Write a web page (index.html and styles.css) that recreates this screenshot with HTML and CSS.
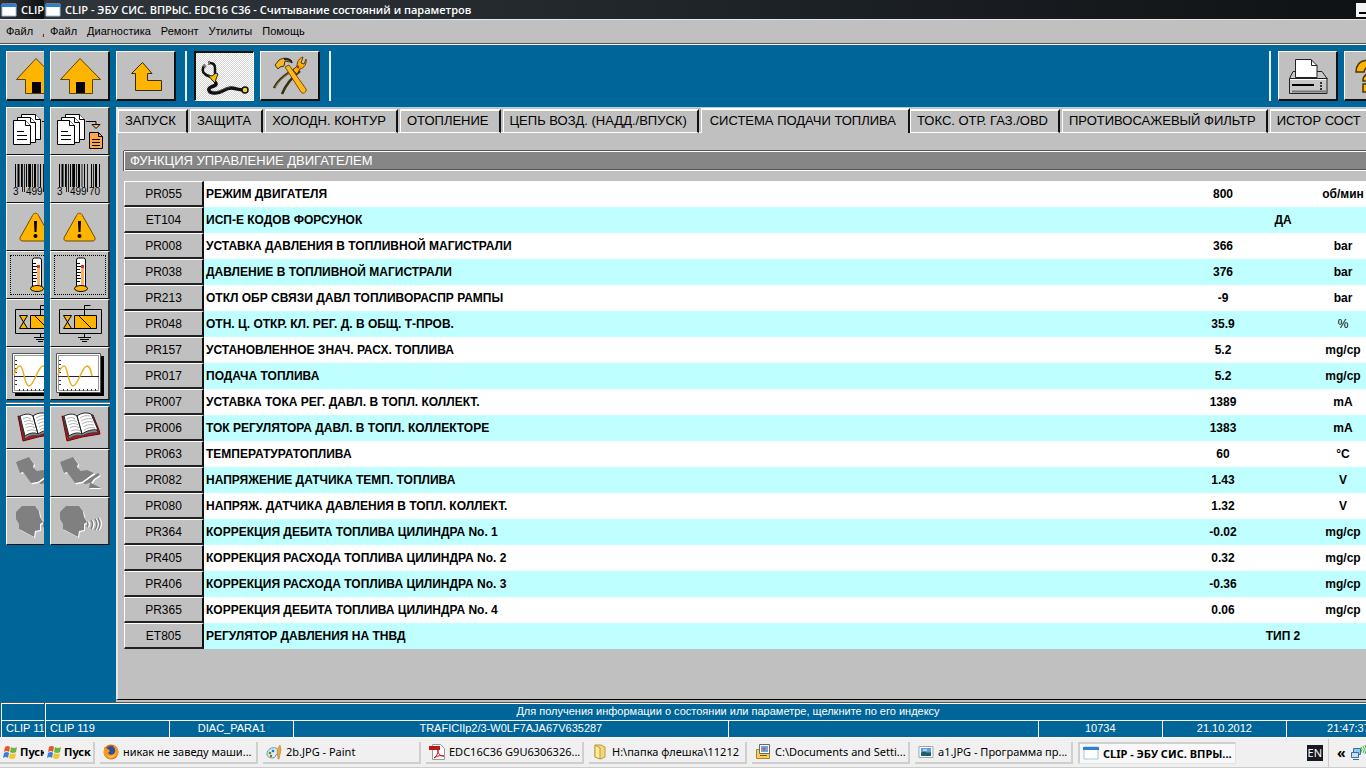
FILE: index.html
```
<!DOCTYPE html>
<html lang="ru">

<head>
  <meta charset="UTF-8">
  <meta name="viewport" content="width=device-width, initial-scale=1.0">

  <title>CLIP - Считывание состояний и параметров</title>
  <link rel="stylesheet" href="styles.css">
</head>

<body>
<!-- Icon set -->
<svg class="icon-defs" aria-hidden="true">
  <symbol id="i-app" viewBox="0 0 16 16">
    <path d="M1 2h14v12H1z" fill="#fff" stroke="#a9c3de"/>
    <path d="M0 2h16v3H0z" fill="#2f7fd0"/>
  </symbol>
  <symbol id="i-home" viewBox="0 0 60 50">
    <path d="M30 7.500 50.500 28.500H42.500V42.500H19.500V28.500H10.500Z" fill="#ffb400" stroke="#5e4200"/>
    <path d="M26 31h9v11h-9z" fill="#000"/>
  </symbol>
  <symbol id="i-up" viewBox="0 0 60 50">
    <path d="M26.500 11.500 36 22.500H31.500V29.500H45.500V39.500H19.500V22.500H15.500Z" fill="#ffb400" stroke="#3c2b00"/>
  </symbol>
  <symbol id="i-steth" viewBox="0 0 60 50">
    <path d="M11 13C8 16 8 20 11 22C13 24 15 24 17 25M16 11C20 11 21 13 21 16V22" fill="none" stroke="#111" stroke-width="2.500"/>
    <path d="M9 13l3 2M15 9v4" stroke="#776" stroke-width="2"/>
    <path d="M14 23l4 1 4-3 2 1-2 5-1 4-3-3z" fill="#ffc000" stroke="#222"/>
    <path d="M21 30C24 33 20 34 17 35C13 37 15 41 20 41C28 42 30 36 37 36C41 36 44 38 49 38" fill="none" stroke="#111" stroke-width="3.500"/>
    <path d="M18 39c7 2 11-3 18-4" fill="none" stroke="#666" stroke-width=".7"/>
    <circle cx="51" cy="38" r="3" fill="#ffd230" stroke="#111" stroke-width="1.500"/>
  </symbol>
  <symbol id="i-tools" viewBox="0 0 60 50">
    <path d="M37 17C28 22 19 27 14 37M40 20C31 27 26 33 22 43" fill="none" stroke="#3b2d10" stroke-width="2.500"/>
    <path d="M36 18C27 23 20 28 15 36" fill="none" stroke="#b08a3c" stroke-width=".8"/>
    <path d="M25 16l4-2 17 24c1 3-3 6-5 3z" fill="#ffb81c" stroke="#7a4c00"/>
    <path d="M15 14l4-5c5-3 10-2 13 1l-2 1-5-1-1 5-4 1-2 2z" fill="#f3b62c" stroke="#4a3208"/>
    <path d="M24 8c4 0 7 1 8 4" fill="none" stroke="#222" stroke-width="2"/>
    <path d="M33 19l4-4c0-4 2-8 6-9l-2 6 3 1 2-5c1 5-2 9-6 10l-3 5z" fill="#ffb000" stroke="#5f3e00"/>
    <circle cx="38" cy="16" r="1.500" fill="#c03010"/>
  </symbol>
  <symbol id="i-print" viewBox="0 0 60 50">
    <path d="M15 20.500h29l5 7v15H11.500v-15z" fill="#c8c8c8" stroke="#222"/>
    <path d="M17.500 26.500v-18H33l6 6v12z" fill="#fff" stroke="#222"/>
    <path d="M33.500 8.500v6H39" fill="none" stroke="#222"/>
    <path d="M11.500 27.500h38" stroke="#222"/>
    <path d="M12 28.500h36" stroke="#fff"/>
    <path d="M14 34h22" stroke="#000" stroke-width="2"/>
    <path d="M14 40.500h34" stroke="#777" stroke-width="2"/>
    <path d="M42 32h2M42 35h2M42 38h2" stroke="#000" stroke-width="1.500"/>
  </symbol>
  <symbol id="i-help" viewBox="0 0 60 50">
    <path d="M12 21C12 12 18 9 25 9c8 0 13 4 13 10 0 8-11 7-10 11H19c-1-8 9-8 9-11 0-4-7-4-8 2zM19 33h9v8h-9z" fill="#ffb400" stroke="#4c3500" stroke-width="1.500"/>
  </symbol>
  <symbol id="i-docs" viewBox="0 0 60 48">
    <g fill="#fff" stroke="#000">
      <path d="M15.500 7.500h14l5 5v20h-19z"/>
      <path d="M29.500 7.500v5h5"/>
      <path d="M11.500 10.500h13l5 5v20h-18z"/>
      <path d="M24.500 10.500v5h5"/>
      <path d="M7.500 13.500h12l5 5v19h-17z"/>
      <path d="M19.500 13.500v5h5"/>
    </g>
    <path d="M11 24.500h7M11 28.500h10M11 32.500h10M36 14.500h10v3" fill="none" stroke="#000"/>
    <path d="M42 17.500h8l-4 4z" fill="#ffb366" stroke="#000"/>
    <path d="M39.500 25.500h9l4 4v12h-13z" fill="#ffa64d" stroke="#000"/>
    <path d="M48.500 25.500v4h4M42 32.500h8M42 35.500h8M42 38.500h8" fill="none" stroke="#000"/>
  </symbol>
  <symbol id="i-barcode" viewBox="0 0 60 48">
    <path d="M9.500 9v23M15.500 9v23M20.500 9v23M34.500 9v23M41.500 9v23M49.500 9v23" stroke="#000"/>
    <path d="M12.500 9v23M24 9v23M29 9v23M46 9v23" stroke="#000" stroke-width="2"/>
    <path d="M16.500 9v28M18.500 9v28M37.500 9v28M22.500 9v23M26.500 9v23M32 9v23M43.500 9v23" stroke="#222"/>
  </symbol>
  <symbol id="i-warn" viewBox="0 0 60 48">
    <path d="M26.500 12.500c1-3 5-3 6 0L44 33c2 3 1 5-2 5H17c-3 0-4-2-2-5z" fill="#ffb400" stroke="#6b4a00"/>
    <path d="M28 18h3l-.5 11h-2z" fill="#000"/>
    <circle cx="29.500" cy="33" r="2" fill="#000"/>
  </symbol>
  <symbol id="i-thermo" viewBox="0 0 60 48">
    <path d="M26.500 9q0-2 2-2h5q2 0 2 2v28h-9z" fill="#fff" stroke="#000"/>
    <path d="M31 15h3v21h-3z" fill="#ffb066"/>
    <path d="M31 14h3v3h-3z" fill="#e03020"/>
    <path d="M27 12.500h3M27 15.500h4M27 18.500h3M27 21.500h4M27 24.500h3M27 27.500h4M27 30.500h3" stroke="#000"/>
    <ellipse cx="31" cy="37.500" rx="6.500" ry="3" fill="#ffb400" stroke="#000"/>
  </symbol>
  <symbol id="i-valve" viewBox="0 0 60 48">
    <path d="M34.500 16v-9.500h6M9.500 34.500v-24h42v24zM34.500 34v4M28 38.500h13M30 40.500h9M32 42.500h5" fill="none" stroke="#000"/>
    <path d="M13.500 16.500h8l-8 13h8z" fill="#ffb400" stroke="#000"/>
    <path d="M24.500 16.500h22v13h-22z" fill="#ffb400" stroke="#000"/>
    <path d="M29 17l12 12M21 29.500h4" stroke="#000"/>
  </symbol>
  <symbol id="i-wave" viewBox="0 0 60 53">
    <path d="M9 9h45v40H9z" fill="#000"/>
    <path d="M6.500 6.500h44v39h-44z" fill="#fff" stroke="#555"/>
    <path d="M8.500 8.500h40v35h-40z" fill="#fff" stroke="#999"/>
    <path d="M8 29.500h41" stroke="#224"/>
    <path d="M9 13.500h2M9 17.500h2M9 21.500h2M9 25.500h2M9 33.500h2M9 37.500h2M13.500 42v2M17.500 42v2M21.500 42v2M25.500 42v2M29.500 42v2M33.500 42v2M37.500 42v2M41.500 42v2M45.500 42v2" stroke="#333"/>
    <path d="M8 28c2-6 4-9 6-9 4 0 4 20 9 20S32 19 37 19c3 0 4 5 5 10" fill="none" stroke="#e8b020" stroke-width="1.500"/>
  </symbol>
  <symbol id="i-book" viewBox="0 0 60 43">
    <path d="M12 10l5 25 15-4 18-3-1-4-6-15-26 2z" fill="#b01828" stroke="#700"/>
    <path d="M13 11l6 22c4-3 8-4 13-3 4-2 10-4 16-3L43 9z" fill="#888" stroke="#333"/>
    <path d="M14 10c5-2 9-3 13 0l5 18c-4-2-9-1-13 2zM27 10c4-3 9-4 14-2l7 16c-6-1-12 1-16 4z" fill="#fff" stroke="#222"/>
    <path d="M17 13c3-2 5-2 8 0M18 16c3-2 6-2 9 0M19 19c3-2 6-2 9 0M20 22c3-2 6-2 9 0M21 25c3-1 6-2 9 0M30 12c3-2 6-3 10-2M31 15c3-2 7-3 11-2M32 18c3-2 7-3 11-2M33 21c3-2 7-3 11-2M34 24c3-2 6-3 11-2" fill="none" stroke="#999" stroke-width=".8"/>
  </symbol>
  <symbol id="i-seat" viewBox="0 0 60 48">
    <path d="M10 13 23 8 28 15 27 18 31 22 37 21 44 24 32 33 25 34 17 23 14 24ZM33 32 40 28 48 24 50 26 44 30 41 35 51 39H39L40 34Z" fill="#fff" transform="translate(1 1)"/>
    <path d="M10 13 23 8 28 15 27 18 31 22 37 21 44 24 32 33 25 34 17 23 14 24Z" fill="#808080"/>
    <path d="M33 34 40 29 48 24 50 26 44 30 41 34 51 39H39L40 34 35 35Z" fill="#808080"/>
    <path d="M26 35 33 33 45 25" fill="none" stroke="#fff"/>
  </symbol>
  <symbol id="i-voice" viewBox="0 0 60 48">
    <path id="head" d="M10 15 16 9H29L33 14 34 20 37 25 34 27V33L29 34 28 40 13 32V27L10 22Z" fill="#fff" transform="translate(1 1)"/>
    <path d="M10 15 16 9H29L33 14 34 20 37 25 34 27V33L29 34 28 40 13 32V27L10 22Z" fill="#808080"/>
    <path d="M38 25q2 2 0 5M42 23q3 4 0 9M46 22q4 5 0 11M49 21q4 6 0 12" fill="none" stroke="#fff" stroke-width="2"/>
    <path d="M37 25q2 2 0 5M41 23q3 4 0 9M45 22q4 5 0 11M48 21q4 6 0 12" fill="none" stroke="#808080" stroke-width="1.500"/>
  </symbol>
  <symbol id="i-start" viewBox="0 0 16 16">
    <path d="M2 3q3-2 5 0l-1 5q-2-2-5 0z" fill="#e8542a"/>
    <path d="M8 3q3 2 6 0l-1 5q-3 2-6 0z" fill="#69b63c"/>
    <path d="M1 9q3-2 5 0l-1 5q-2-2-5 0z" fill="#3b7ed6"/>
    <path d="M7 9q3 2 6 0l-1 5q-3 2-6 0z" fill="#f4c52f"/>
  </symbol>
  <symbol id="i-firefox" viewBox="0 0 16 16">
    <circle cx="8" cy="8" r="7.500" fill="#e26a12"/>
    <circle cx="8" cy="6.500" r="4.500" fill="#2b4f9e"/>
    <path d="M1 3c2 1 3 2 4 2l2 2-2 2c2 3 6 2 7-1 1-3-1-5-2-6 4 0 6 4 5 8-3 6-12 7-14 0z" fill="#f79a1c"/>
    <path d="M4 11c4 3 8 1 9-3-1 6-6 7-9 3z" fill="#ffe070"/>
  </symbol>
  <symbol id="i-paint" viewBox="0 0 16 16">
    <path d="M1 10c0-5 5-7 9-6 4 2 3 5 1 6s-1 4-4 4-6-1-6-4z" fill="#d9eef2" stroke="#5d9aa8"/>
    <circle cx="4" cy="9" r="1.300" fill="#3a9b3a"/>
    <circle cx="7" cy="7" r="1.300" fill="#2f6fd0"/>
    <circle cx="5" cy="12" r="1.200" fill="#d04030"/>
    <path d="M14 1l1 5-2 9h-1l-1-9z" fill="#f2a63a" stroke="#a96a20" stroke-width=".5"/>
  </symbol>
  <symbol id="i-pdf" viewBox="0 0 16 16">
    <path d="M3.500.5h8l4 4v11h-12z" fill="#fff" stroke="#999"/>
    <path d="M0 2h11v4H0z" fill="#c01818"/>
    <path d="M5 14c3-2 4-5 4-8 0 4 2 6 6 6-4-1-7 0-10 2z" fill="none" stroke="#c01818"/>
  </symbol>
  <symbol id="i-folder" viewBox="0 0 16 16">
    <path d="M3 1h6l4 2v10l-4 2-6-2z" fill="#f5d778" stroke="#c09a3a"/>
    <path d="M3 1l5 3v11l-5-2z" fill="#ffeaa0" stroke="#c09a3a"/>
  </symbol>
  <symbol id="i-pictures" viewBox="0 0 16 16">
    <path d="M1.500 5.500h13v9h-13z" fill="#f5d25c" stroke="#a8822a"/>
    <path d="M4.500.5h10v9h-10z" fill="#fff" stroke="#667"/>
    <path d="M6 2h7v6H6z" fill="#6aa5e0"/>
    <circle cx="9" cy="5" r="1.500" fill="#d65a30"/>
    <path d="M5 11.500h7" stroke="#745810"/>
  </symbol>
  <symbol id="i-viewer" viewBox="0 0 16 16">
    <path d="M1 2.500h14v11H1z" fill="#fff" stroke="#98a6b8"/>
    <path d="M3 4h10v8H3z" fill="#5f9fd8"/>
    <path d="M3 9c3-3 6 1 10-1v4H3z" fill="#1f5c66"/>
    <path d="M5 6h4" stroke="#fff"/>
  </symbol>
  <symbol id="i-net" viewBox="0 0 16 16">
    <path d="M3.500 3.500h7v6h-7z" fill="#8fc8f5" stroke="#446a9a"/>
    <path d="M1.500 7.500h7v5h-7z" fill="#bfe2ff" stroke="#446a9a"/>
    <path d="M3 14.500h6" stroke="#446a9a"/>
    <path d="M11 2q2 2 0 5M13 1q3 3 0 7M15 0q3 4 0 9" fill="none" stroke="#39b530"/>
  </symbol>
</svg>

<div class="desktop">

  <!-- Window underneath, only its left edge shows -->
  <div class="window window-behind">
    <header class="title-bar">
      <svg class="icon-small"><use href="#i-app"/></svg>
      <span>CLIP</span>
    </header>
    <nav class="menu-bar">
      <a href="#">Файл</a>
      <a href="#">Диагностика</a>
    </nav>
    <div class="toolbar">
      <button class="tool" aria-label="Домой"><svg><use href="#i-home"/></svg></button>
    </div>
    <div class="workspace">
      <aside class="sidebar">
        <button class="side" aria-label="Отчет"><svg><use href="#i-docs"/></svg></button>
        <button class="side" aria-label="Идентификация">
          <svg viewBox="0 0 60 48">
            <use href="#i-barcode"/>
            <text x="7" y="40">3</text>
            <text x="20" y="40">499</text>
            <text x="39" y="40">70</text>
          </svg>
        </button>
        <button class="side" aria-label="Неисправности"><svg><use href="#i-warn"/></svg></button>
        <button class="side focused" aria-label="Параметры"><svg><use href="#i-thermo"/></svg></button>
        <button class="side" aria-label="Команды"><svg><use href="#i-valve"/></svg></button>
        <button class="side side-tall" aria-label="График"><svg><use href="#i-wave"/></svg></button>
        <hr class="side-line">
        <button class="side side-low" aria-label="Справочник"><svg><use href="#i-book"/></svg></button>
        <button class="side" disabled aria-label="Рабочее место"><svg><use href="#i-seat"/></svg></button>
        <button class="side" disabled aria-label="Голос"><svg><use href="#i-voice"/></svg></button>
      </aside>
    </div>
    <div class="status-hint"></div>
    <div class="status-bar"><span class="cell cell-left">CLIP 119</span></div>
    <footer class="taskbar">
      <button class="start"><svg class="icon-small"><use href="#i-start"/></svg>Пуск</button>
    </footer>
  </div>

  <div class="window">
    <header class="title-bar">
      <svg class="icon-small"><use href="#i-app"/></svg>
      <span>CLIP - ЭБУ СИС. ВПРЫС. EDC16 C36 - Считывание состояний и параметров</span>
      <div class="window-controls">
        <button class="minimize" aria-label="Свернуть"></button>
        <button aria-label="Развернуть"></button>
        <button aria-label="Закрыть"></button>
      </div>
    </header>
    <nav class="menu-bar">
      <a href="#">Файл</a>
      <a href="#">Диагностика</a>
      <a href="#">Ремонт</a>
      <a href="#">Утилиты</a>
      <a href="#">Помощь</a>
    </nav>
    <div class="toolbar">
      <button class="tool" aria-label="Домой"><svg><use href="#i-home"/></svg></button>
      <button class="tool" aria-label="Назад"><svg><use href="#i-up"/></svg></button>
      <span class="divider"></span>
      <button class="tool pressed" aria-label="Диагностика"><svg><use href="#i-steth"/></svg></button>
      <button class="tool" aria-label="Ремонт"><svg><use href="#i-tools"/></svg></button>
      <span class="divider"></span>
      <span class="spacer"></span>
      <span class="divider"></span>
      <button class="tool" aria-label="Печать"><svg><use href="#i-print"/></svg></button>
      <button class="tool" aria-label="Помощь"><svg><use href="#i-help"/></svg></button>
    </div>

    <div class="workspace">
      <aside class="sidebar">
        <button class="side" aria-label="Отчет"><svg><use href="#i-docs"/></svg></button>
        <button class="side" aria-label="Идентификация">
          <svg viewBox="0 0 60 48">
            <use href="#i-barcode"/>
            <text x="7" y="40">3</text>
            <text x="20" y="40">499</text>
            <text x="39" y="40">70</text>
          </svg>
        </button>
        <button class="side" aria-label="Неисправности"><svg><use href="#i-warn"/></svg></button>
        <button class="side focused" aria-label="Параметры"><svg><use href="#i-thermo"/></svg></button>
        <button class="side" aria-label="Команды"><svg><use href="#i-valve"/></svg></button>
        <button class="side side-tall" aria-label="График"><svg><use href="#i-wave"/></svg></button>
        <hr class="side-line">
        <button class="side side-low" aria-label="Справочник"><svg><use href="#i-book"/></svg></button>
        <button class="side" disabled aria-label="Рабочее место"><svg><use href="#i-seat"/></svg></button>
        <button class="side" disabled aria-label="Голос"><svg><use href="#i-voice"/></svg></button>
      </aside>

      <main class="panel">
        <div class="tabs" role="tablist">
          <button class="tab" role="tab">ЗАПУСК</button>
          <button class="tab" role="tab">ЗАЩИТА</button>
          <button class="tab" role="tab">ХОЛОДН. КОНТУР</button>
          <button class="tab" role="tab">ОТОПЛЕНИЕ</button>
          <button class="tab" role="tab">ЦЕПЬ ВОЗД. (НАДД./ВПУСК)</button>
          <button class="tab active" role="tab" aria-selected="true">СИСТЕМА ПОДАЧИ ТОПЛИВА</button>
          <button class="tab" role="tab">ТОКС. ОТР. ГАЗ./OBD</button>
          <button class="tab" role="tab">ПРОТИВОСАЖЕВЫЙ ФИЛЬТР</button>
          <button class="tab tab-last" role="tab">ИСТОР СОСТ</button>
        </div>

        <div class="panel-body">
          <h1 class="section-title">ФУНКЦИЯ УПРАВЛЕНИЕ ДВИГАТЕЛЕМ</h1>

          <table class="params">
            <tbody>
            <tr><th><button>PR055</button></th><td>РЕЖИМ ДВИГАТЕЛЯ</td><td class="value">800</td><td class="unit">об/мин</td></tr>
            <tr><th><button>ET104</button></th><td>ИСП-Е КОДОВ ФОРСУНОК</td><td class="state" colspan="2">ДА</td></tr>
            <tr><th><button>PR008</button></th><td>УСТАВКА ДАВЛЕНИЯ В ТОПЛИВНОЙ МАГИСТРАЛИ</td><td class="value">366</td><td class="unit">bar</td></tr>
            <tr><th><button>PR038</button></th><td>ДАВЛЕНИЕ В ТОПЛИВНОЙ МАГИСТРАЛИ</td><td class="value">376</td><td class="unit">bar</td></tr>
            <tr><th><button>PR213</button></th><td>ОТКЛ ОБР СВЯЗИ ДАВЛ ТОПЛИВОРАСПР РАМПЫ</td><td class="value">-9</td><td class="unit">bar</td></tr>
            <tr><th><button>PR048</button></th><td>ОТН. Ц. ОТКР. КЛ. РЕГ. Д. В ОБЩ. Т-ПРОВ.</td><td class="value">35.9</td><td class="unit thin">%</td></tr>
            <tr><th><button>PR157</button></th><td>УСТАНОВЛЕННОЕ ЗНАЧ. РАСХ. ТОПЛИВА</td><td class="value">5.2</td><td class="unit">mg/cp</td></tr>
            <tr><th><button>PR017</button></th><td>ПОДАЧА ТОПЛИВА</td><td class="value">5.2</td><td class="unit">mg/cp</td></tr>
            <tr><th><button>PR007</button></th><td>УСТАВКА ТОКА РЕГ. ДАВЛ. В ТОПЛ. КОЛЛЕКТ.</td><td class="value">1389</td><td class="unit">mA</td></tr>
            <tr><th><button>PR006</button></th><td>ТОК РЕГУЛЯТОРА ДАВЛ. В ТОПЛ. КОЛЛЕКТОРЕ</td><td class="value">1383</td><td class="unit">mA</td></tr>
            <tr><th><button>PR063</button></th><td>ТЕМПЕРАТУРАТОПЛИВА</td><td class="value">60</td><td class="unit">°C</td></tr>
            <tr><th><button>PR082</button></th><td>НАПРЯЖЕНИЕ ДАТЧИКА ТЕМП. ТОПЛИВА</td><td class="value">1.43</td><td class="unit">V</td></tr>
            <tr><th><button>PR080</button></th><td>НАПРЯЖ. ДАТЧИКА ДАВЛЕНИЯ В ТОПЛ. КОЛЛЕКТ.</td><td class="value">1.32</td><td class="unit">V</td></tr>
            <tr><th><button>PR364</button></th><td>КОРРЕКЦИЯ ДЕБИТА ТОПЛИВА ЦИЛИНДРА No. 1</td><td class="value">-0.02</td><td class="unit">mg/cp</td></tr>
            <tr><th><button>PR405</button></th><td>КОРРЕКЦИЯ РАСХОДА ТОПЛИВА ЦИЛИНДРА No. 2</td><td class="value">0.32</td><td class="unit">mg/cp</td></tr>
            <tr><th><button>PR406</button></th><td>КОРРЕКЦИЯ РАСХОДА ТОПЛИВА ЦИЛИНДРА No. 3</td><td class="value">-0.36</td><td class="unit">mg/cp</td></tr>
            <tr><th><button>PR365</button></th><td>КОРРЕКЦИЯ ДЕБИТА ТОПЛИВА ЦИЛИНДРА No. 4</td><td class="value">0.06</td><td class="unit">mg/cp</td></tr>
            <tr><th><button>ET805</button></th><td>РЕГУЛЯТОР ДАВЛЕНИЯ НА ТНВД</td><td class="state" colspan="2">ТИП 2</td></tr>
            </tbody>
          </table>
        </div>
      </main>
    </div>

    <div class="status-hint">Для получения информации о состоянии или параметре, щелкните по его индексу</div>
    <div class="status-bar">
      <span class="cell cell-left">CLIP 119</span>
      <span class="cell">DIAC_PARA1</span>
      <span class="cell">TRAFICIIp2/3-W0LF7AJA67V635287</span>
      <span class="cell"></span>
      <span class="cell">10734</span>
      <span class="cell">21.10.2012</span>
      <span class="cell">21:47:37</span>
    </div>

    <footer class="taskbar">
      <button class="start"><svg class="icon-small"><use href="#i-start"/></svg>Пуск</button>
      <button class="task"><svg class="icon-small"><use href="#i-firefox"/></svg>никак не заведу маши...</button>
      <button class="task"><svg class="icon-small"><use href="#i-paint"/></svg>2b.JPG - Paint</button>
      <button class="task"><svg class="icon-small"><use href="#i-pdf"/></svg>EDC16C36 G9U6306326...</button>
      <button class="task"><svg class="icon-small"><use href="#i-folder"/></svg>H:\папка флешка\11212</button>
      <button class="task"><svg class="icon-small"><use href="#i-pictures"/></svg>C:\Documents and Setti...</button>
      <button class="task"><svg class="icon-small"><use href="#i-viewer"/></svg>a1.JPG - Программа пр...</button>
      <button class="task current"><svg class="icon-small"><use href="#i-app"/></svg>CLIP - ЭБУ СИС. ВПРЫ...</button>
      <span class="spacer"></span>
      <span class="lang">EN</span>
      <div class="tray">
        <span class="tray-more">«</span>
        <svg class="icon-small"><use href="#i-net"/></svg>
      </div>
    </footer>
  </div>

</div>
</body>

</html>
```
FILE: styles.css
```
:root {
  --blue: #006699;
  --gray: #c0c0c0;
  --row-alt: #c0ffff;
}

* {
  box-sizing: border-box;
}

body {
  margin: 0;
  font-family: "Liberation Sans", Arial, sans-serif;
  font-size: 12px;
  color: #000;
  background-color: var(--blue);
}

button {
  margin: 0;
  padding: 0;
  border: none;
  border-radius: 0;
  font: inherit;
  color: inherit;
  background-color: var(--gray);
}

.icon-defs {
  position: absolute;
  width: 0;
  height: 0;
}

.icon-small {
  width: 16px;
  height: 16px;
  flex: none;
}

.spacer {
  flex: 1;
}

/* Two overlapping windows side by side */
.desktop {
  display: flex;
  min-height: 100vh;
  overflow: hidden;
}

.window {
  display: flex;
  flex-direction: column;
  flex: none;
  width: 100vw;
}

.window-behind {
  width: 44px;
  overflow: hidden;
}

/* Title and menu */
.title-bar {
  display: flex;
  align-items: center;
  gap: 4px;
  height: 19px;
  padding: 0 8px 0 1px;
  font-family: "Open Sans", Tahoma, sans-serif;
  font-size: 11px;
  font-weight: 600;
  white-space: nowrap;
  color: #fff;
  background: linear-gradient(to right, #2f363b, #0e1114);
}

.window-controls {
  display: flex;
  gap: 2px;
  margin-left: auto;
}

.window-controls button {
  width: 14px;
  height: 14px;
  background-color: #f4f4f4;
}

.window-controls .minimize {
  border: solid #f4f4f4;
  border-width: 0 3px 3px;
  box-shadow: inset 0 -2px #000;
}

.menu-bar {
  display: flex;
  align-items: center;
  gap: 10px;
  height: 26px;
  padding: 0 6px 2px;
  font-size: 11px;
  background-color: var(--gray);
  border-top: 1px solid #e8e8e8;
  border-bottom: 1px solid #fff;
  box-shadow: inset 0 -1px #555;
}

.menu-bar a {
  color: #000;
  text-decoration: none;
}

/* Toolbar */
.toolbar {
  display: flex;
  gap: 6px;
  height: 62px;
  padding: 6px;
}

.tool {
  flex: none;
  width: 60px;
  height: 50px;
  border: 1px solid #fff;
  border-right: 2px solid #111;
  border-bottom: 2px solid #111;
}

.tool svg {
  display: block;
  width: 60px;
  height: 50px;
  margin: -1px;
}

.pressed {
  border: 2px solid #111;
  border-right: 1px solid #fff;
  border-bottom: 1px solid #fff;
  background: repeating-conic-gradient(#fff 0 25%, #d4d4d4 0 50%) 0 0 / 2px 2px;
}

.pressed svg {
  margin: -2px;
}

.divider {
  width: 2px;
  margin: 0 1px 0 3px;
  background-color: #e8eef2;
}

/* Sidebar */
.workspace {
  display: flex;
  flex: 1;
}

.sidebar {
  flex: none;
  width: 72px;
  padding-left: 6px;
}

.side {
  display: block;
  width: 60px;
  height: 48px;
  border: 1px solid #fff;
  border-right: 2px solid #333;
  border-bottom: 1px solid #111;
}

.side svg {
  display: block;
  width: 60px;
  height: 48px;
  margin: -1px;
  font-size: 10px;
}

.side-tall,
.side-tall svg {
  height: 53px;
}

.side-low,
.side-low svg {
  height: 43px;
}

.focused {
  outline: 1px dotted #000;
  outline-offset: -5px;
}

.side-line {
  width: 60px;
  height: 2px;
  margin: 2px 0;
  border: none;
  border-top: 1px solid #777;
  background-color: #fff;
}

/* Panel with tabs */
.panel {
  display: flex;
  flex-direction: column;
  flex: 1;
  min-width: 0;
  margin-bottom: 3px;
  background-color: var(--gray);
  border-left: 2px solid #e6e6e6;
  border-bottom: 1px solid #000;
  box-shadow: 0 2px var(--gray);
}

.tabs {
  display: flex;
  align-items: flex-end;
  height: 26px;
  overflow: hidden;
  background: linear-gradient(#fff, #fff) 0 100% / 100% 1px no-repeat;
  border-top: 1px solid #b5cbe0;
}

.tab {
  flex: none;
  height: 24px;
  margin-right: 2px;
  padding: 0 10px 2px 6px;
  font-size: 13px;
  white-space: nowrap;
  border-top: 2px solid #fff;
  border-left: 1px solid #fff;
  border-right: 2px solid #111;
  border-bottom: 1px solid #fff;
}

.tab.active {
  height: 25px;
  margin: 0;
  padding: 0 12px 3px 8px;
  border-bottom: none;
}

.tab-last {
  flex: 1;
  text-align: left;
}

.panel-body {
  flex: 1;
  padding: 18px 7px 45px 6px;
}

.section-title {
  margin: 0 0 10px;
  padding: 0 5px;
  font-size: 13px;
  font-weight: normal;
  line-height: 18px;
  color: #fff;
  background-color: #868686;
  border: 1px solid #fff;
  box-shadow: inset 0 -1px #555, 0 -1px #555, -1px 0 #555;
}

.params {
  width: 100%;
  table-layout: fixed;
  border-collapse: collapse;
}

.params th,
.params td {
  height: 26px;
  padding: 0;
}

.params th {
  width: 80px;
}

.params button {
  display: block;
  width: 80px;
  height: 26px;
  font-size: 12px;
  font-weight: normal;
  border-top: 1px solid #fff;
  border-left: 1px solid #fff;
  border-right: 2px solid #111;
  border-bottom: 2px solid #222;
}

.params td {
  padding-left: 2px;
  font-weight: bold;
  background-color: #fff;
}

.params tr:nth-child(even) td {
  background-color: var(--row-alt);
}

.params .value,
.params .unit {
  width: 120px;
  padding: 0;
  text-align: center;
}

.params .state {
  padding: 0;
  text-align: center;
}

.params .thin {
  font-weight: normal;
}

/* Status lines */
.status-hint,
.status-bar {
  height: 17px;
  margin-left: 1px;
  font-size: 11px;
  line-height: 15px;
  white-space: nowrap;
  color: #fff;
  text-align: center;
}

.status-hint {
  border-top: 1px solid #fff;
  border-left: 1px solid #fff;
  box-shadow: 0 -1px #555;
}

.status-bar {
  display: grid;
  grid-template-columns: 2fr 2fr 7fr 5fr 2fr 2fr 2fr;
}

.window-behind .status-bar {
  grid-template-columns: 1fr;
}

.cell {
  overflow: hidden;
  border-top: 1px solid #fff;
  border-left: 1px solid #fff;
}

.cell-left {
  padding-left: 4px;
  text-align: left;
}

/* Taskbar */
.taskbar {
  display: flex;
  align-items: center;
  gap: 5px;
  height: 31px;
  font-family: "Noto Sans", Tahoma, sans-serif;
  font-size: 11px;
  background-color: #f1f0f0;
  border-top: 1px solid #fff;
  border-bottom: 1px solid #ccc;
}

.start,
.task {
  display: flex;
  flex: none;
  align-items: center;
  gap: 4px;
  height: 22px;
  overflow: hidden;
  white-space: nowrap;
  background-color: #f1f0f0;
  border-right: 2px solid #cfcfcf;
  border-bottom: 2px solid #cfcfcf;
}

.start {
  width: 51px;
  padding-left: 3px;
  gap: 1px;
  font-weight: bold;
}

.task {
  width: 158px;
  padding-left: 3px;
}

.current {
  font-weight: bold;
  background-color: #f8f8f8;
  border: 1px solid #e2e2e2;
  border-top: 2px solid #cfcfcf;
  border-left: 2px solid #cfcfcf;
}

.lang {
  padding: 0 1px;
  line-height: 16px;
  color: #fff;
  background-color: #16191f;
}

.tray {
  display: flex;
  align-items: center;
  gap: 4px;
  width: 82px;
  height: 28px;
  padding-left: 8px;
  border-left: 1px solid #ccc;
}

.tray-more {
  font-size: 14px;
  font-weight: bold;
}
```
